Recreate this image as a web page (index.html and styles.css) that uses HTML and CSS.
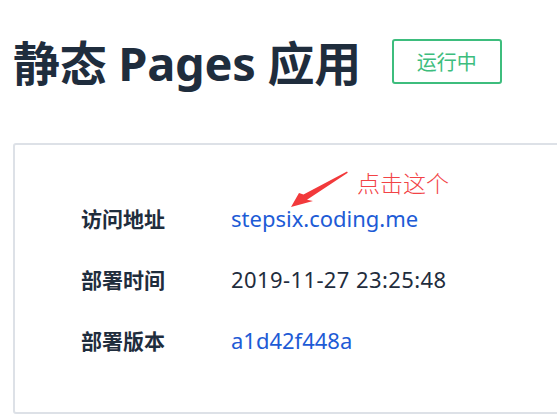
FILE: index.html
```html
<!DOCTYPE html>
<html lang="zh-CN">
<head>
<meta charset="utf-8">
<link rel="stylesheet" href="styles.css">
</head>
<body>
<div class="page">
  <header class="header">
    <h1 class="title">静态 Pages 应用</h1>
    <span class="badge">运行中</span>
  </header>
  <section class="card">
    <div class="note">
      <svg class="arrow" width="80" height="45" viewBox="0 0 80 45">
        <path d="M16 37 L24 23 L28.5 24.6 L72 1.6 L72.8 2.8 L32 29.8 L38 31 Z" fill="#f2393b"/>
      </svg>
      <span class="note-text">点击这个</span>
    </div>
    <dl class="info">
      <div class="row"><dt>访问地址</dt><dd><a class="link">stepsix.coding.me</a></dd></div>
      <div class="row"><dt>部署时间</dt><dd class="date">2019-11-27 23:25:48</dd></div>
      <div class="row"><dt>部署版本</dt><dd><a class="link">a1d42f448a</a></dd></div>
    </dl>
  </section>
</div>
</body>
</html>
```
FILE: styles.css
```css
html, body {
  margin: 0;
  padding: 0;
  background: #fff;
  overflow: hidden;
}
body {
  width: 557px;
  height: 420px;
  font-family: "Noto Sans", "Noto Sans CJK SC", sans-serif;
  color: #1f2d3d;
}
.page {
  padding: 30px 0 0 13px;
}
.header {
  display: flex;
  align-items: center;
  height: 66px;
}
.title {
  margin: 0;
  font-size: 47px;
  font-weight: 700;
  line-height: 66px;
  font-family: "Noto Sans", "Noto Sans CJK SC", sans-serif;
  color: #1f2d3d;
  letter-spacing: -0.3px;
}
.badge {
  margin-left: 31px;
  width: 110px;
  height: 45px;
  box-sizing: border-box;
  border: 2px solid #3dbd7d;
  border-radius: 3px;
  color: #3dbd7d;
  font-size: 20px;
  font-family: "Noto Sans CJK SC", sans-serif;
  display: flex;
  align-items: center;
  justify-content: center;
  margin-top: -3px;
}
.card {
  position: relative;
  margin-top: 47px;
  width: 600px;
  height: 271px;
  border: 2px solid #dde1e7;
  border-radius: 3px;
  box-sizing: border-box;
}
.note {
  position: absolute;
  left: 260px;
  top: 25px;
}
.arrow {
  position: absolute;
  left: 0;
  top: 0;
}
.note-text {
  position: absolute;
  left: 82px;
  top: 1px;
  line-height: 1;
  white-space: nowrap;
  color: #f24346;
  font-size: 23px;
  font-family: "Noto Sans CJK SC", sans-serif;
  font-weight: 300;
}
.info {
  margin: 0;
  padding: 42px 0 0 66px;
  display: flex;
  flex-direction: column;
}
.row {
  display: flex;
  align-items: center;
  height: 61px;
}
dt {
  width: 150px;
  font-weight: 700;
  font-size: 21px;
  font-family: "Noto Sans CJK SC", sans-serif;
}
dd {
  margin: 0;
  font-size: 22px;
  color: #1f2d3d;
}
.date {
  letter-spacing: 0.4px;
}
.link {
  color: #1d5bd6;
  text-decoration: none;
}
```
